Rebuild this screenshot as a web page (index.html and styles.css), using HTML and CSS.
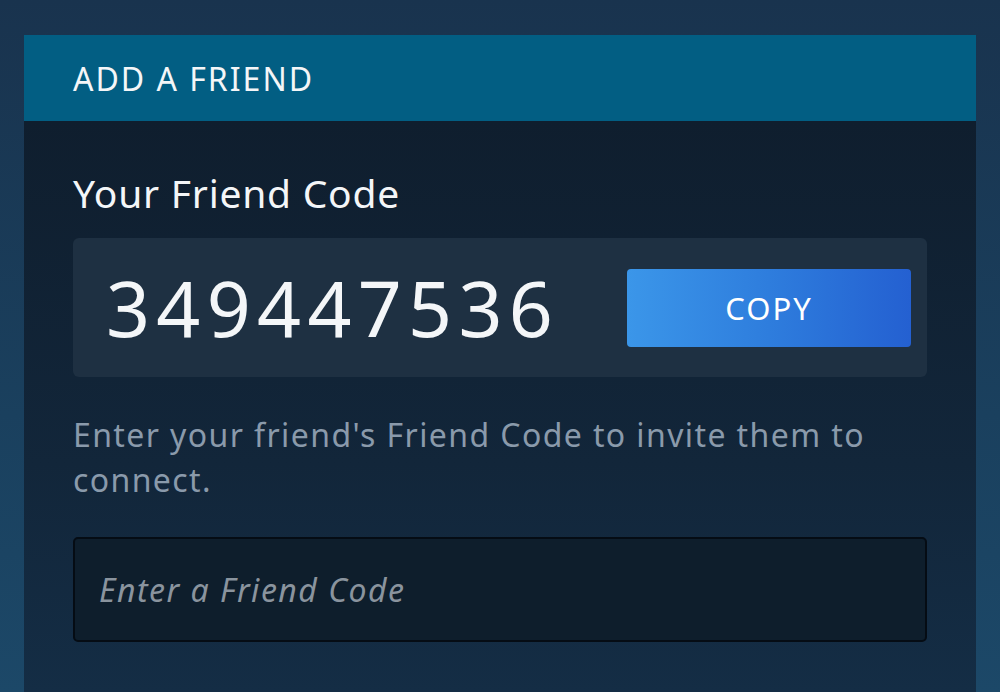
FILE: index.html
```html
<!DOCTYPE html>
<html lang="en">
<head>
<meta charset="utf-8">
<title>Add a Friend</title>
<link rel="stylesheet" href="styles.css">
</head>
<body>
<div class="panel">
  <div class="panel-header">ADD A FRIEND</div>
  <div class="panel-body">
    <div class="section-title">Your Friend Code</div>
    <div class="code-box">
      <div class="code">349447536</div>
      <button class="copy-btn">COPY</button>
    </div>
    <p class="desc">Enter your friend's Friend Code to invite them to connect.</p>
    <input class="code-input" type="text" placeholder="Enter a Friend Code">
  </div>
</div>
</body>
</html>
```

FILE: styles.css
```css
html, body {
  margin: 0;
  height: 100%;
}
body {
  background: linear-gradient(180deg, #19334e 0%, #1a405e 60%, #1c4868 100%);
  font-family: "Noto Sans", "Open Sans", sans-serif;
  color: #ffffff;
  overflow: hidden;
}
.panel {
  margin: 35px 24px 0;
  height: calc(100% - 35px);
  display: flex;
  flex-direction: column;
}
.panel-header {
  height: 86px;
  flex: none;
  background: #025e83;
  display: flex;
  align-items: center;
  padding-left: 49px;
  font-size: 32px;
  letter-spacing: 2px;
  color: #f4f6f8;
}
.panel-body {
  flex: 1;
  background: linear-gradient(180deg, #0f1e2e 0%, #12263a 60%, #142d45 100%);
  padding: 0 49px;
}
.section-title {
  margin-top: 48px;
  font-size: 39px;
  line-height: 47px;
  letter-spacing: 0.75px;
  color: #f4f6f8;
}
.code-box {
  margin-top: 22px;
  height: 139px;
  box-sizing: border-box;
  background: #1e3042;
  border-radius: 6px;
  display: flex;
  align-items: center;
  justify-content: space-between;
  padding: 0 16px 0 33px;
}
.code {
  font-size: 77px;
  letter-spacing: 6.3px;
  line-height: 1;
  color: #f4f6f8;
}
.copy-btn {
  width: 284px;
  height: 78px;
  border: none;
  border-radius: 4px;
  background: linear-gradient(90deg, #3b96e9 0%, #2e7ddd 50%, #2460d1 100%);
  color: #ffffff;
  font-family: "Noto Sans", "Open Sans", sans-serif;
  font-size: 31px;
  letter-spacing: 2px;
  padding: 0;
}
.desc {
  margin: 35px 0 0;
  font-size: 32px;
  line-height: 45px;
  letter-spacing: 1.4px;
  color: #8a9aab;
}
.code-input {
  display: block;
  margin-top: 35px;
  width: 100%;
  height: 105px;
  box-sizing: border-box;
  border: 2px solid #050c14;
  border-radius: 5px;
  background: #0e1e2c;
  padding: 0 24px;
  font-family: "Noto Sans", "Open Sans", sans-serif;
  font-size: 32px;
  letter-spacing: 1.5px;
  color: #dfe4ea;
  outline: none;
}
.code-input::placeholder {
  font-style: italic;
  color: #8a949e;
}
```
